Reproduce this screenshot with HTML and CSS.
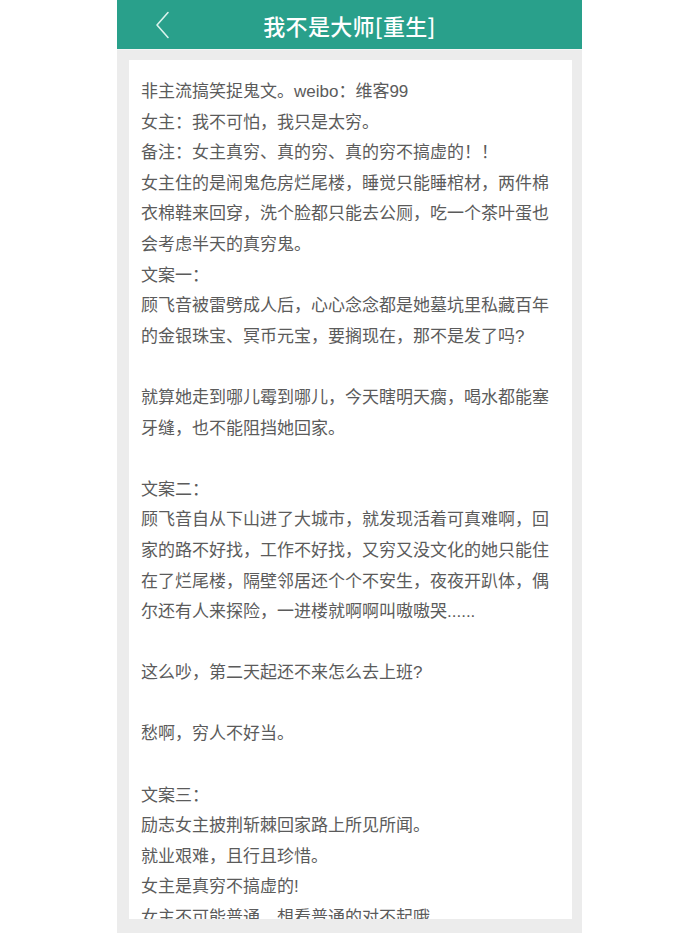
FILE: index.html
```html
<!DOCTYPE html>
<html lang="zh-CN">
<head>
<meta charset="utf-8">
<title>我不是大师[重生]</title>
<link rel="stylesheet" href="styles.css">
</head>
<body>
<div class="phone">
  <header class="topbar">
    <svg class="back" width="16" height="28" viewBox="0 0 16 28" aria-hidden="true">
      <polyline points="13,1.5 2,14 13,26.5" fill="none" stroke="#d9f3ec" stroke-width="1.6" stroke-linecap="round" stroke-linejoin="round"/>
    </svg>
    <h1 class="title">我不是大师[重生]</h1>
  </header>
  <main class="page">
    <article class="card">
      <p>非主流搞笑捉鬼文。weibo：维客99</p>
      <p>女主：我不可怕，我只是太穷。</p>
      <p>备注：女主真穷、真的穷、真的穷不搞虚的！！</p>
      <p>女主住的是闹鬼危房烂尾楼，睡觉只能睡棺材，两件棉衣棉鞋来回穿，洗个脸都只能去公厕，吃一个茶叶蛋也会考虑半天的真穷鬼。</p>
      <p>文案一：</p>
      <p>顾飞音被雷劈成人后，心心念念都是她墓坑里私藏百年的金银珠宝、冥币元宝，要搁现在，那不是发了吗?</p>
      <p class="blank"></p>
      <p>就算她走到哪儿霉到哪儿，今天瞎明天瘸，喝水都能塞牙缝，也不能阻挡她回家。</p>
      <p class="blank"></p>
      <p>文案二：</p>
      <p>顾飞音自从下山进了大城市，就发现活着可真难啊，回家的路不好找，工作不好找，又穷又没文化的她只能住在了烂尾楼，隔壁邻居还个个不安生，夜夜开趴体，偶尔还有人来探险，一进楼就啊啊叫嗷嗷哭......</p>
      <p class="blank"></p>
      <p>这么吵，第二天起还不来怎么去上班?</p>
      <p class="blank"></p>
      <p>愁啊，穷人不好当。</p>
      <p class="blank"></p>
      <p>文案三：</p>
      <p>励志女主披荆斩棘回家路上所见所闻。</p>
      <p>就业艰难，且行且珍惜。</p>
      <p>女主是真穷不搞虚的!</p>
      <p>女主不可能普通，想看普通的对不起哦</p>
    </article>
  </main>
</div>
</body>
</html>
```

FILE: styles.css
```css
html, body {
  margin: 0;
  padding: 0;
  background: #ffffff;
}

body {
  width: 700px;
  height: 933px;
  overflow: hidden;
  font-family: "Liberation Sans", "Noto Sans CJK SC", sans-serif;
}

.phone {
  margin-left: 117px;
  width: 465px;
  height: 933px;
  display: flex;
  flex-direction: column;
  background: #ececec;
}

.topbar {
  position: relative;
  height: 49px;
  flex: none;
  background: #29a08b;
  display: flex;
  align-items: center;
  justify-content: center;
  border-bottom: 1px solid #f4f4f4;
}

.back {
  position: absolute;
  left: 38px;
  top: 11px;
}

.title {
  margin: 0;
  color: #ffffff;
  font-size: 22px;
  font-weight: 500;
  letter-spacing: 0.3px;
  font-family: "Noto Sans CJK SC", sans-serif;
}

.page {
  flex: 1;
  min-height: 0;
  padding: 10px 10px 14px 12px;
  display: flex;
}

.card {
  flex: 1;
  background: #ffffff;
  padding: 17px 12px 0 12px;
  overflow: hidden;
  color: #5b5b5b;
  font-size: 17px;
  line-height: 30.6px;
}

.card p {
  margin: 0;
}

.card .blank {
  height: 30.6px;
}
```
